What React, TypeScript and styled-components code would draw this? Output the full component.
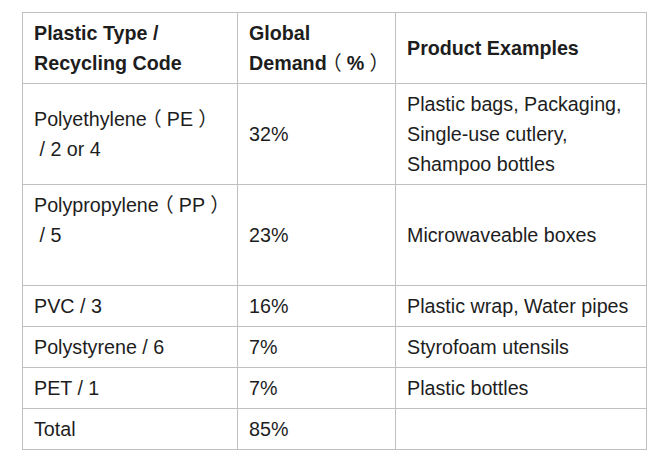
import * as React from 'react';
import styled, { createGlobalStyle } from 'styled-components';

interface IRow {
  type: string[];
  demand: string;
  examples: string[];
  alignTop?: boolean;
}

const GlobalStyle = createGlobalStyle`
  body {
    margin: 0;
    background: #fff;
    font-family: "Liberation Sans", Arial, "Noto Sans CJK SC", sans-serif;
    color: #1d1d1d;
  }
`;

const Page = styled.div`
  padding: 12px 0 0 22px;
`;

const Table = styled.table`
  border-collapse: collapse;
  table-layout: fixed;
  width: 624px;
  font-size: 19.7px;
  line-height: 30px;
`;

const Cell = styled.td<{ $top?: boolean }>`
  border: 1px solid #c0c0c0;
  padding: 5px 11px;
  vertical-align: ${(p) => (p.$top ? 'top' : 'middle')};
  text-align: left;
  white-space: nowrap;
`;

const HeadCell = styled(Cell).attrs({ as: 'th' })`
  font-weight: bold;
`;

const Line = styled.div`
  height: 30px;
`;

// full-width brackets, drawn centred in their em box
const Paren = styled.span`
  font-family: "Noto Sans CJK SC", sans-serif;
  font-weight: normal;
  font-feature-settings: "halt";
  line-height: 0;
  padding: 0 0.26em;
`;

const rows: IRow[] = [
  {
    type: ['Polyethylene（PE）', '\u00a0/ 2 or 4'],
    demand: '32%',
    examples: ['Plastic bags, Packaging,', 'Single-use cutlery,', 'Shampoo bottles'],
  },
  {
    type: ['Polypropylene（PP）', '\u00a0/ 5', ''],
    demand: '23%',
    examples: ['Microwaveable boxes'],
    alignTop: true,
  },
  { type: ['PVC / 3'], demand: '16%', examples: ['Plastic wrap, Water pipes'] },
  { type: ['Polystyrene / 6'], demand: '7%', examples: ['Styrofoam utensils'] },
  { type: ['PET / 1'], demand: '7%', examples: ['Plastic bottles'] },
  { type: ['Total'], demand: '85%', examples: [''] },
];

const withParens = (text: string) =>
  text.split(/([（）])/).map((part, i) =>
    part === '（' || part === '）' ? <Paren key={i}>{part}</Paren> : part,
  );

const lines = (items: string[]) => items.map((t, i) => <Line key={i}>{withParens(t)}</Line>);

export default function App() {
  return (
    <Page>
      <GlobalStyle />
      <Table>
        <colgroup>
          <col style={{ width: 215 }} />
          <col style={{ width: 158 }} />
          <col style={{ width: 251 }} />
        </colgroup>
        <thead>
          <tr>
            <HeadCell>{lines(['Plastic Type /', 'Recycling Code'])}</HeadCell>
            <HeadCell>{lines(['Global', 'Demand（%）'])}</HeadCell>
            <HeadCell>{lines(['Product Examples'])}</HeadCell>
          </tr>
        </thead>
        <tbody>
          {rows.map((row, i) => (
            <tr key={i}>
              <Cell $top={row.alignTop}>{lines(row.type)}</Cell>
              <Cell>{lines([row.demand])}</Cell>
              <Cell>{lines(row.examples)}</Cell>
            </tr>
          ))}
        </tbody>
      </Table>
    </Page>
  );
}
